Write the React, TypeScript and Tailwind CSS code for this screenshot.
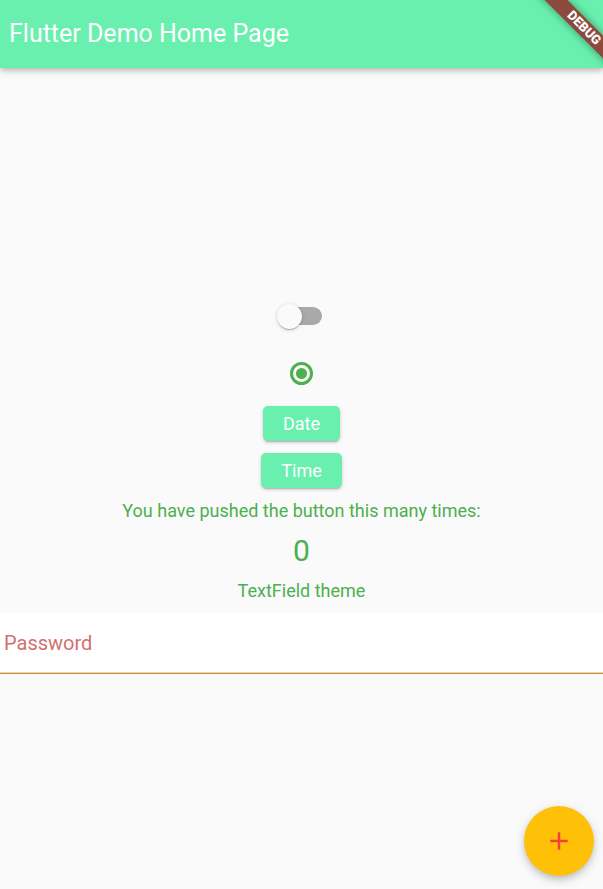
import { useState } from "react";

const raised =
  "h-[35px] rounded-[5px] bg-[#69f0ae] px-5 text-lg leading-[35px] text-white shadow-[0_3px_1px_-2px_rgba(0,0,0,0.14),0_2px_3px_0_rgba(0,0,0,0.1),0_1px_4px_0_rgba(0,0,0,0.1)]";

export default function App() {
  const [count, setCount] = useState(0);
  const [on, setOn] = useState(false);

  return (
    <div className="relative flex min-h-screen flex-col overflow-hidden bg-[#fafafa] font-[Roboto,sans-serif] text-[#4caf50]">
      <header className="z-10 flex h-[68px] items-center bg-[#69f0ae] px-[9px] shadow-[0_2px_5px_-1px_rgba(0,0,0,0.16),0_4px_6px_0_rgba(0,0,0,0.1),0_1px_10px_0_rgba(0,0,0,0.08)]">
        <h1 className="text-[25px] leading-[30px] text-white">Flutter Demo Home Page</h1>
      </header>

      <div className="pointer-events-none absolute top-0 right-0 z-20 size-20 overflow-hidden">
        <div className="absolute top-[20px] -right-[41px] h-[16px] w-[120px] rotate-45 bg-[#8c4a3c] text-center text-[13px] leading-[16px] font-black text-white shadow-[0_0_8px_rgba(0,0,0,0.4)]">
          DEBUG
        </div>
      </div>

      <main className="flex flex-1 flex-col items-center justify-center pt-px">
        <label className="flex h-16 w-[74px] cursor-pointer items-center justify-center">
          <input
            type="checkbox"
            role="switch"
            aria-label="Switch"
            checked={on}
            onChange={(e) => setOn(e.target.checked)}
            className="peer sr-only"
          />
          <span className="flex h-[18px] w-[41px] items-center rounded-full bg-[#a9a9a9] peer-checked:justify-end">
            <span className="-mx-1 size-[25px] shrink-0 rounded-full bg-[#fafafa] shadow-[0_2px_1px_-1px_rgba(0,0,0,0.14),0_1px_1px_0_rgba(0,0,0,0.1),0_1px_4px_0_rgba(0,0,0,0.16)]" />
          </span>
        </label>
        <div className="flex h-[50px] items-center">
          <input
            type="radio"
            name="option"
            aria-label="Option"
            defaultChecked
            className="grid size-[23px] appearance-none place-items-center rounded-full border-[3px] border-[#4caf50] before:size-[11px] before:rounded-full before:bg-[#4caf50]"
          />
        </div>
        <div className="flex flex-col items-center gap-3 py-2">
          <button type="button" className={raised}>Date</button>
          <button type="button" className={raised}>Time</button>
        </div>
        <p className="pt-[5px] text-lg leading-[20px]">You have pushed the button this many times:</p>
        <p className="py-2 text-[30px] leading-[44px]">{count}</p>
        <p className="pb-3 text-lg leading-[20px]">TextField theme</p>
        <input
          type="password"
          aria-label="Password"
          placeholder="Password"
          className="h-[61px] w-full border-b border-[#d58c2b] bg-white px-1 text-xl text-[#4caf50] shadow-[inset_0_-1px_0_#f0d5b0] outline-none placeholder:text-[#d0716f]"
        />
      </main>

      <button
        type="button"
        aria-label="Increment"
        onClick={() => setCount(count + 1)}
        className="absolute right-[9px] bottom-[13px] flex size-[70px] items-center justify-center rounded-full bg-[#ffc107] shadow-[0_3px_6px_-1px_rgba(0,0,0,0.14),0_5px_10px_0_rgba(0,0,0,0.1),0_1px_16px_0_rgba(0,0,0,0.06)]"
      >
        <svg viewBox="0 0 24 24" className="size-[30px] fill-[#f44336]">
          <path d="M19 13h-6v6h-2v-6H5v-2h6V5h2v6h6v2z" />
        </svg>
      </button>
    </div>
  );
}
